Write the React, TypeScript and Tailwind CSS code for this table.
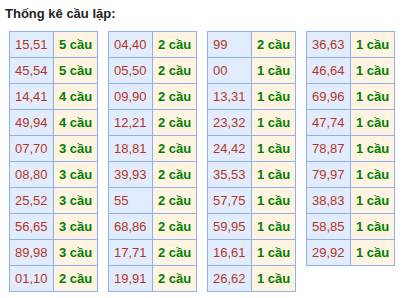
const tables: [string, string][][] = [
  [
    ["15,51", "5 cầu"],
    ["45,54", "5 cầu"],
    ["14,41", "4 cầu"],
    ["49,94", "4 cầu"],
    ["07,70", "3 cầu"],
    ["08,80", "3 cầu"],
    ["25,52", "3 cầu"],
    ["56,65", "3 cầu"],
    ["89,98", "3 cầu"],
    ["01,10", "2 cầu"],
  ],
  [
    ["04,40", "2 cầu"],
    ["05,50", "2 cầu"],
    ["09,90", "2 cầu"],
    ["12,21", "2 cầu"],
    ["18,81", "2 cầu"],
    ["39,93", "2 cầu"],
    ["55", "2 cầu"],
    ["68,86", "2 cầu"],
    ["17,71", "2 cầu"],
    ["19,91", "2 cầu"],
  ],
  [
    ["99", "2 cầu"],
    ["00", "1 cầu"],
    ["13,31", "1 cầu"],
    ["23,32", "1 cầu"],
    ["24,42", "1 cầu"],
    ["35,53", "1 cầu"],
    ["57,75", "1 cầu"],
    ["59,95", "1 cầu"],
    ["16,61", "1 cầu"],
    ["26,62", "1 cầu"],
  ],
  [
    ["36,63", "1 cầu"],
    ["46,64", "1 cầu"],
    ["69,96", "1 cầu"],
    ["47,74", "1 cầu"],
    ["78,87", "1 cầu"],
    ["79,97", "1 cầu"],
    ["38,83", "1 cầu"],
    ["58,85", "1 cầu"],
    ["29,92", "1 cầu"],
  ],
];

function CauTable({ rows }: { rows: [string, string][] }) {
  return (
    <div className="flex flex-col self-start border-l border-t border-[#8eb0ee]">
      {rows.map(([pair, count]) => (
        <div key={pair} className="flex h-[26px]">
          <div className="flex w-[44px] items-center border-r border-b border-[#8eb0ee] bg-[#e1edff] pl-[5px] text-[#b5361d]">
            {pair}
          </div>
          <div className="flex w-[44px] items-center border-r border-b border-[#8eb0ee] bg-[#fff4e1] pl-[5px] font-bold text-[#008000]">
            {count}
          </div>
        </div>
      ))}
    </div>
  );
}

export default function App() {
  return (
    <div className="h-[298px] w-[417px] bg-white font-['Liberation_Sans',Arial,sans-serif] text-[13px]">
      <div className="pl-[5px] pt-[4px] text-[13px] font-bold leading-[20px] text-[#222]">
        Thống kê cầu lặp:
      </div>
      <div className="mt-[7px] flex gap-[10px] pl-[9px] leading-[25px]">
        {tables.map((rows, i) => (
          <CauTable key={i} rows={rows} />
        ))}
      </div>
    </div>
  );
}
